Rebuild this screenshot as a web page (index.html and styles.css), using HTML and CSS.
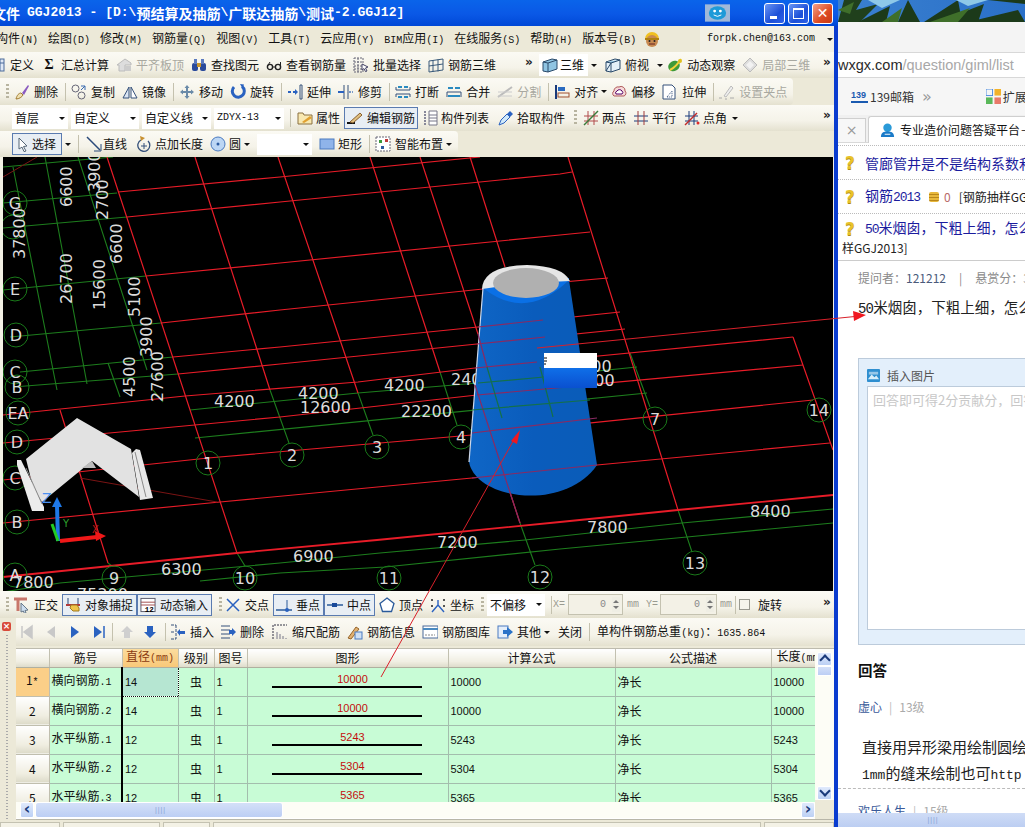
FILE: index.html
```html
<!DOCTYPE html>
<html lang="zh">
<head>
<meta charset="utf-8">
<title>GGJ2013</title>
<link rel="stylesheet" href="styles.css">
</head>
<body>
<svg class="defs" xmlns="http://www.w3.org/2000/svg">
<symbol id="i-def" viewBox="0 0 16 16"><rect x="2" y="2" width="12" height="12" fill="#dfe8f5" stroke="#4a6a9a"/><path d="M2 6h12M6 2v12M10 2v12" stroke="#4a6a9a"/></symbol>
<symbol id="i-level" viewBox="0 0 16 16"><path d="M1 8L9 2l6 4v2H9v6H3V8z" fill="#ddd" stroke="#bbb"/><rect x="9" y="9" width="6" height="5" fill="#ccc"/></symbol>
<symbol id="i-find" viewBox="0 0 16 16"><rect x="1" y="6" width="6" height="8" rx="2" fill="#2a4a9a"/><rect x="9" y="6" width="6" height="8" rx="2" fill="#2a4a9a"/><rect x="6" y="6" width="4" height="4" fill="#c9962a"/><rect x="3" y="2" width="3" height="5" fill="#5a7ac0"/><rect x="10" y="2" width="3" height="5" fill="#5a7ac0"/></symbol>
<symbol id="i-glass" viewBox="0 0 16 16"><circle cx="4" cy="10" r="2.6" fill="none" stroke="#222" stroke-width="1.4"/><circle cx="12" cy="10" r="2.6" fill="none" stroke="#222" stroke-width="1.4"/><path d="M6.5 10h3M1.5 9L4 5M14.5 9V5" stroke="#222" fill="none"/></symbol>
<symbol id="i-batch" viewBox="0 0 16 16"><path d="M1 1h9v14H1zM1 5h9M1 9h9M1 12h9M5 1v14" fill="none" stroke="#667" stroke-dasharray="2 1"/><path d="M9 7l6 3-2.5 1 1.5 3-1.5.6-1.5-3L9 13z" fill="#fff" stroke="#446"/></symbol>
<symbol id="i-rebar" viewBox="0 0 16 16"><path d="M1 4l14-2v11L1 15zM1 9l14-2M5 3v12M10 2.500v12" fill="none" stroke="#3a5a7a"/></symbol>
<symbol id="i-cube" viewBox="0 0 16 16"><path d="M1 5l9-3 5 1v9l-9 3-5-1z" fill="#8fc4e2" stroke="#2a4a6a"/><path d="M1 5l5 1 9-3M6 6v9" fill="none" stroke="#2a4a6a"/></symbol>
<symbol id="i-cubet" viewBox="0 0 16 16"><path d="M1 5l9-3 5 1v9l-9 3-5-1z" fill="#e4f0f8" stroke="#2a4a6a"/><path d="M1 5l5 1 9-3" fill="#8fc4e2" stroke="#2a4a6a"/><path d="M6 6v9M1 14l5-8" fill="none" stroke="#2a4a6a"/></symbol>
<symbol id="i-orbit" viewBox="0 0 16 16"><ellipse cx="7" cy="9" rx="6" ry="5" fill="#3f9a3a" transform="rotate(-30 7 9)"/><path d="M3 13C7 11 11 7 14 2" stroke="#f5d23a" stroke-width="2" fill="none"/><circle cx="13" cy="4" r="2" fill="#e0c020"/></symbol>
<symbol id="i-part" viewBox="0 0 16 16"><path d="M8 1l7 7-7 7-7-7z" fill="#ddd" stroke="#bbb"/><path d="M4 8l4-4 4 4-4 4z" fill="#f2f2f2"/></symbol>
<symbol id="i-del" viewBox="0 0 16 16"><path d="M2 15c1-4 3-6 5-6l2 2c-1 2-4 4-7 4z" fill="#efe0b0" stroke="#a07a30"/><path d="M8 9l6-8 1 1-5 9z" fill="#8a5ac0"/></symbol>
<symbol id="i-copy" viewBox="0 0 16 16"><circle cx="4.500" cy="4.500" r="3.500" fill="none" stroke="#667"/><circle cx="10.500" cy="11.500" r="3.500" fill="none" stroke="#667"/><path d="M10 2h4v4M14 2l-4 4" fill="none" stroke="#3a6ab0"/></symbol>
<symbol id="i-mirror" viewBox="0 0 16 16"><path d="M7 3v11H1z" fill="#dbe6f4" stroke="#35507a"/><path d="M9 3v11h6z" fill="#fff" stroke="#35507a"/></symbol>
<symbol id="i-move" viewBox="0 0 16 16"><path d="M8 1l2.500 3H9v3h3V5.500L15 8l-3 2.500V9H9v3h1.500L8 15l-2.500-3H7V9H4v1.500L1 8l3-2.500V7h3V4H5.500z" fill="#6a8aa8"/></symbol>
<symbol id="i-rot" viewBox="0 0 16 16"><path d="M4 3a6 6 0 1 0 8-.5" fill="none" stroke="#2a62c0" stroke-width="3"/><path d="M10 0l4 .5-1.500 4z" fill="#2a62c0"/></symbol>
<symbol id="i-ext" viewBox="0 0 16 16"><path d="M1 8h3M6 8h2" stroke="#2a62c0" stroke-width="2"/><path d="M8 5l3 3-3 3z" fill="#2a62c0"/><path d="M13 1h2v14h-2z" fill="none" stroke="#35507a"/></symbol>
<symbol id="i-trim" viewBox="0 0 16 16"><path d="M6 1v14M10 1v14" stroke="#35507a"/><path d="M0 8h6" stroke="#2a62c0" stroke-width="2"/><path d="M11 8h4" stroke="#7a9ac8" stroke-width="2" stroke-dasharray="2 1"/></symbol>
<symbol id="i-brk" viewBox="0 0 16 16"><path d="M1 3v3h14V3M1 13v-3h14v3" fill="none" stroke="#35507a"/><path d="M3 3h4M13 3H9M3 13h4M13 13H9" stroke="#2a8ac0" stroke-width="2"/></symbol>
<symbol id="i-mrg" viewBox="0 0 16 16"><path d="M1 13V8h14v5" fill="none" stroke="#35507a"/><path d="M2 4h5M14 4H9M2 12h12" stroke="#2a8ac0" stroke-width="2"/></symbol>
<symbol id="i-spl" viewBox="0 0 16 16"><path d="M1 13l14-10" stroke="#bbb" stroke-width="2"/><path d="M1 8h14M1 12h14" stroke="#ccc"/></symbol>
<symbol id="i-align" viewBox="0 0 16 16"><path d="M2 1v14" stroke="#1a3a7a" stroke-width="2"/><rect x="4" y="3" width="7" height="4" fill="#2a6ac0"/><rect x="4" y="9" width="11" height="4" fill="none" stroke="#a05030"/></symbol>
<symbol id="i-off" viewBox="0 0 16 16"><path d="M3 12a3 3 0 0 1 0-5 4 4 0 0 1 5-4 4 4 0 0 1 6 4 3 3 0 0 1-1 5z" fill="#f5d8d8" stroke="#b05a5a"/><path d="M5 10a2 2 0 0 1 1-3 3 3 0 0 1 5 0 2 2 0 0 1 0 3z" fill="#fff" stroke="#506"/></symbol>
<symbol id="i-str" viewBox="0 0 16 16"><path d="M1 1h9l3 3v11H1z" fill="#fff" stroke="#35507a"/><path d="M5 13l5-6v6z" fill="none" stroke="#35507a" stroke-dasharray="1 1"/></symbol>
<symbol id="i-grip" viewBox="0 0 16 16"><path d="M5 12L12 2l2 2-7 9z" fill="#eee" stroke="#bbb"/><path d="M0 14h3M6 15h2M11 14h4" stroke="#aaa"/></symbol>
<symbol id="i-prop" viewBox="0 0 16 16"><path d="M1 3h5l1 2h8v9H1z" fill="#f8e8b0" stroke="#8a7040"/><path d="M5 12l8-6 2 2-8 5z" fill="#e0a030"/></symbol>
<symbol id="i-edit" viewBox="0 0 16 16"><path d="M0 13h8" stroke="#111" stroke-width="2"/><path d="M3 12L13 3l2 2-9 8z" fill="#e0c080" stroke="#8a6030"/></symbol>
<symbol id="i-list" viewBox="0 0 16 16"><path d="M7 1h8v14H7zM7 5h8M7 8h8M7 11h8" fill="#fff" stroke="#778"/><path d="M2 2h2M2 5h2M2 8h2M2 11h2M2 14h2" stroke="#889" stroke-width="2"/></symbol>
<symbol id="i-pick" viewBox="0 0 16 16"><path d="M1 15l2-5 6-6 3 3-6 6z" fill="#cfe8fa" stroke="#2a62c0"/><path d="M9 4l3-3 3 3-3 3z" fill="#2a62c0"/></symbol>
<symbol id="i-two" viewBox="0 0 16 16"><path d="M1 6h14M1 11h14M5 1v14M11 1v14" stroke="#b04a4a"/><path d="M1 15L15 1" stroke="#3a7a3a" stroke-width="1.500"/></symbol>
<symbol id="i-par" viewBox="0 0 16 16"><path d="M1 6h14M1 11h14" stroke="#1a3a7a"/><path d="M5 1v14M11 1v14" stroke="#a03a3a"/></symbol>
<symbol id="i-ang" viewBox="0 0 16 16"><path d="M1 6h13M1 11h13M5 1v14M10 1v14" stroke="#1a3a7a"/><path d="M1 15L13 3" stroke="#c02a2a" stroke-width="1.500"/><circle cx="14" cy="13" r="1.500" fill="#e02a2a"/></symbol>
<symbol id="i-sel" viewBox="0 0 16 16"><path d="M4 2l8 8-3.500.5L11 15l-2 .6-2-4.500L4 13z" fill="#fff" stroke="#567"/></symbol>
<symbol id="i-line" viewBox="0 0 16 16"><path d="M1 1l13 13" stroke="#2a4a7a" stroke-width="1.500"/><path d="M15 8v7H8" fill="none" stroke="#2a4a7a"/></symbol>
<symbol id="i-plen" viewBox="0 0 16 16"><path d="M5 4a6 6 0 1 0 7 1" fill="none" stroke="#35507a" stroke-width="1.300"/><path d="M8 7v6M5 10h6" stroke="#35507a"/><path d="M4 0l5 2-4 3z" fill="#c89030"/></symbol>
<symbol id="i-circ" viewBox="0 0 16 16"><circle cx="8" cy="8" r="7" fill="#bcd6f4" stroke="#4a7ac0"/><circle cx="8" cy="8" r="1.500" fill="#2a5aa0"/></symbol>
<symbol id="i-rect" viewBox="0 0 16 16"><rect x="1" y="3" width="14" height="10" fill="#8fb4ea" stroke="#4a7ac0"/></symbol>
<symbol id="i-smart" viewBox="0 0 16 16"><rect x="1" y="1" width="14" height="14" fill="#fff" stroke="#667" stroke-dasharray="2 1"/><rect x="4" y="4" width="3" height="3" fill="#3a9a3a"/><rect x="10" y="3" width="3" height="3" fill="#c03a3a"/><rect x="6" y="10" width="3" height="3" fill="#2a5aa0"/></symbol>
<symbol id="i-ortho" viewBox="0 0 16 16"><path d="M0 2h13M4 2v12" stroke="#c8766a" stroke-width="3"/><path d="M7 6l7 7-3 .5 1 2.500-1.500.500-1.200-2.500L7 15z" fill="#cde" stroke="#678"/></symbol>
<symbol id="i-snap" viewBox="0 0 16 16"><path d="M1 8h14" stroke="#b03a3a" stroke-width="2"/><path d="M3 1v6M13 1v6" stroke="#2a4a7a"/><path d="M6 8h6l2 3v3H8l-3-3z" fill="#efc44a" stroke="#a07a20"/></symbol>
<symbol id="i-dyn" viewBox="0 0 17 16"><rect x="1" y="1" width="15" height="14" fill="#fff" stroke="#556"/><path d="M1 5h15M1 8h15" stroke="#a04a4a"/><text x="5" y="15" font-size="8" font-family="Liberation Mono" font-weight="700">12</text></symbol>
<symbol id="i-x" viewBox="0 0 16 16"><path d="M2 2l12 12M14 2L2 14" stroke="#2a62c0" stroke-width="1.500"/></symbol>
<symbol id="i-perp" viewBox="0 0 16 16"><path d="M0 13h16" stroke="#2a5a9a" stroke-width="1.500"/><path d="M11 3v10" stroke="#2a5a9a"/><circle cx="11" cy="13" r="2" fill="#2a62c0"/></symbol>
<symbol id="i-mid" viewBox="0 0 16 16"><path d="M0 8h16" stroke="#2a5a9a" stroke-width="1.500"/><rect x="5" y="6" width="5" height="4" fill="#1a4a9a"/></symbol>
<symbol id="i-vert" viewBox="0 0 16 16"><path d="M8 1l7 5.500-2.500 8h-9L1 6.500z" fill="#fff" stroke="#2a5a9a" stroke-width="1.300"/></symbol>
<symbol id="i-crd" viewBox="0 0 16 16"><path d="M8 8l-6 7M8 8l6 7M8 8V3" stroke="#2a62c0" stroke-width="1.400"/><path d="M1 3h2M13 3h2M1 9h2M13 9h2" stroke="#555" stroke-width="2" stroke-dasharray="2 1"/></symbol>
<symbol id="i-first" viewBox="0 0 16 16"><path d="M3 2v12M13 2L5 8l8 6z" stroke="#c8c8c8" fill="#c8c8c8" stroke-width="1.500"/></symbol>
<symbol id="i-prev" viewBox="0 0 16 16"><path d="M12 2L4 8l8 6z" fill="#c8c8c8"/></symbol>
<symbol id="i-next" viewBox="0 0 16 16"><path d="M4 2l8 6-8 6z" fill="#2a62c0"/></symbol>
<symbol id="i-last" viewBox="0 0 16 16"><path d="M13 2v12" stroke="#2a62c0" stroke-width="1.500"/><path d="M3 2l8 6-8 6z" fill="#2a62c0"/></symbol>
<symbol id="i-up" viewBox="0 0 16 16"><path d="M8 2l6 6h-3v6H5V8H2z" fill="#cfcfcf"/></symbol>
<symbol id="i-down" viewBox="0 0 16 16"><path d="M8 14l6-6h-3V2H5v6H2z" fill="#2a62c0"/></symbol>
<symbol id="i-ins" viewBox="0 0 16 16"><path d="M1 1h5M1 15h5M1 8h3M6 1v14" fill="none" stroke="#35507a" stroke-dasharray="3 1"/><path d="M7 8l3-3v2h5v3h-5v2z" fill="#2a62c0"/></symbol>
<symbol id="i-rem" viewBox="0 0 16 16"><path d="M1 2h9M1 6h9M1 10h9M1 14h9" stroke="#35507a"/><path d="M9 6h3V4l4 4-4 4v-2H9z" fill="#2a62c0"/></symbol>
<symbol id="i-scale" viewBox="0 0 16 16"><path d="M1 15V1h14" fill="none" stroke="#334" stroke-dasharray="2 1"/><path d="M5 15V8M8 15v-5M11 15v-3M14 15v-1" stroke="#778"/></symbol>
<symbol id="i-info" viewBox="0 0 16 16"><path d="M1 14L9 3l3 2-8 10z" fill="#e0b070" stroke="#96642a"/><rect x="8" y="8" width="7" height="7" fill="#cfe0f4" stroke="#4a7ac0"/></symbol>
<symbol id="i-lib" viewBox="0 0 16 16"><rect x="1" y="2" width="15" height="12" fill="#fff" stroke="#4a6a9a"/><path d="M1 5h15" stroke="#4a8ac0" stroke-width="2"/><path d="M3 11h10" stroke="#888" stroke-dasharray="2 1"/></symbol>
<symbol id="i-other" viewBox="0 0 16 16"><rect x="1" y="2" width="10" height="12" fill="#e4eefa" stroke="#4a7ac0"/><path d="M6 6h4V3l6 5-6 5v-3H6z" fill="#2a72c8"/></symbol>
<symbol id="i-face" viewBox="0 0 18 18"><path d="M2 9a7 7 0 0 1 14 0z" fill="#f0c020"/><circle cx="9" cy="11" r="6" fill="#c88a50"/><path d="M2 9h14" stroke="#b08010" stroke-width="2"/><circle cx="6.500" cy="11" r="1" fill="#222"/><circle cx="11.500" cy="11" r="1" fill="#222"/><path d="M6 14h6" stroke="#622"/></symbol>
</svg>

<main class="desktop">

<section class="app">
  <header class="titlebar">
    <div class="title"><span class="tc">文件</span> <span class="tl">GGJ2013 -</span> <span class="tl">[D:\</span><span class="tc">预结算及抽筋</span><span class="tl">\</span><span class="tc">广联达抽筋</span><span class="tl">\</span><span class="tc">测试</span><span class="tl">-2.GGJ12]</span></div>
    <svg class="logo" viewBox="0 0 26 18"><rect width="26" height="18" fill="#9fb8d8"/><path d="M4 9a9 7 0 0 1 18 0 9 7 0 0 1-18 0z" fill="#1e9ad8"/><circle cx="10" cy="7" r="1.500" fill="#fff"/><circle cx="16" cy="7" r="1.500" fill="#fff"/><path d="M9 11q4 3 8 0" stroke="#fff" fill="none"/></svg>
    <div class="wbtns">
      <span class="wbtn min"><i></i></span>
      <span class="wbtn max"><i></i></span>
      <span class="wbtn close">✕</span>
    </div>
  </header>
  <div class="client">
    <nav class="menu">
      <span class="mi">构件<span class="k">(N)</span></span>
      <span class="mi">绘图<span class="k">(D)</span></span>
      <span class="mi">修改<span class="k">(M)</span></span>
      <span class="mi">钢筋量<span class="k">(Q)</span></span>
      <span class="mi">视图<span class="k">(V)</span></span>
      <span class="mi">工具<span class="k">(T)</span></span>
      <span class="mi">云应用<span class="k">(Y)</span></span>
      <span class="mi"><span class="k">BIM</span>应用<span class="k">(I)</span></span>
      <span class="mi">在线服务<span class="k">(S)</span></span>
      <span class="mi">帮助<span class="k">(H)</span></span>
      <span class="mi">版本号<span class="k">(B)</span></span>
      <svg class="emoji"><use href="#i-face"/></svg>
      <span class="account"><span class="k">forpk.chen@163.com</span><i class="caret"></i></span>
    </nav>

    <div class="band b26">
      <div class="tb full r1">
        <span class="it cut"><svg class="ic"><use href="#i-def"/></svg>定义</span>
        <span class="it"><span class="sigma">Σ</span>汇总计算</span>
        <span class="it off"><svg class="ic"><use href="#i-level"/></svg>平齐板顶</span>
        <span class="it"><svg class="ic"><use href="#i-find"/></svg>查找图元</span>
        <span class="it"><svg class="ic"><use href="#i-glass"/></svg>查看钢筋量</span>
        <span class="it"><svg class="ic"><use href="#i-batch"/></svg>批量选择</span>
        <span class="it"><svg class="ic"><use href="#i-rebar"/></svg>钢筋三维</span>
        <span class="chev c1">»</span>
        <span class="it dim3"><svg class="ic"><use href="#i-cube"/></svg>三维</span>
        <i class="caret"></i>
        <span class="it v"><svg class="ic"><use href="#i-cubet"/></svg>俯视</span>
        <i class="caret c-v"></i>
        <span class="it v"><svg class="ic"><use href="#i-orbit"/></svg>动态观察</span>
        <span class="it off"><svg class="ic"><use href="#i-part"/></svg>局部三维</span>
        <span class="chev end">»</span>
      </div>
    </div>

    <div class="band b27">
      <div class="tb r2">
        <i class="grip"></i>
        <span class="it"><svg class="ic"><use href="#i-del"/></svg>删除</span>
        <i class="sep tight"></i>
        <span class="it"><svg class="ic"><use href="#i-copy"/></svg>复制</span>
        <span class="it"><svg class="ic"><use href="#i-mirror"/></svg>镜像</span>
        <i class="sep tight"></i>
        <span class="it"><svg class="ic"><use href="#i-move"/></svg>移动</span>
        <span class="it"><svg class="ic"><use href="#i-rot"/></svg>旋转</span>
        <i class="sep tight"></i>
        <span class="it"><svg class="ic"><use href="#i-ext"/></svg>延伸</span>
        <span class="it"><svg class="ic"><use href="#i-trim"/></svg>修剪</span>
        <i class="sep tight"></i>
        <span class="it"><svg class="ic"><use href="#i-brk"/></svg>打断</span>
        <span class="it"><svg class="ic"><use href="#i-mrg"/></svg>合并</span>
        <span class="it off"><svg class="ic"><use href="#i-spl"/></svg>分割</span>
        <i class="sep tight"></i>
        <span class="it"><svg class="ic"><use href="#i-align"/></svg>对齐</span>
        <i class="caret"></i>
        <span class="it"><svg class="ic"><use href="#i-off"/></svg>偏移</span>
        <span class="it"><svg class="ic"><use href="#i-str"/></svg>拉伸</span>
        <i class="sep tight"></i>
        <span class="it off"><svg class="ic"><use href="#i-grip"/></svg>设置夹点</span>
      </div>
    </div>

    <div class="band b26">
      <div class="tb full r3">
        <span class="combo c-a">首层<i class="caret"></i></span>
        <span class="combo c-b">自定义<i class="caret"></i></span>
        <span class="combo c-c">自定义线<i class="caret"></i></span>
        <span class="combo c-d"><span class="k">ZDYX-13</span><i class="caret"></i></span>
        <i class="sep"></i>
        <span class="it"><svg class="ic"><use href="#i-prop"/></svg>属性</span>
        <span class="it btn b-edit"><svg class="ic"><use href="#i-edit"/></svg>编辑钢筋</span>
        <span class="it"><svg class="ic"><use href="#i-list"/></svg>构件列表</span>
        <span class="it wide w3"><svg class="ic"><use href="#i-pick"/></svg>拾取构件</span>
        <i class="grip g-mid"></i>
        <span class="it"><svg class="ic"><use href="#i-two"/></svg>两点</span>
        <span class="it w1"><svg class="ic"><use href="#i-par"/></svg>平行</span>
        <span class="it wide"><svg class="ic"><use href="#i-ang"/></svg>点角</span>
        <i class="caret"></i>
        <span class="chev end">»</span>
      </div>
    </div>

    <div class="band b26">
      <div class="tb r4">
        <span class="it btn b-sel"><svg class="ic"><use href="#i-sel"/></svg>选择</span>
        <i class="caret"></i>
        <i class="sep"></i>
        <span class="it g1"><svg class="ic"><use href="#i-line"/></svg>直线</span>
        <span class="it"><svg class="ic"><use href="#i-plen"/></svg>点加长度</span>
        <span class="it"><svg class="ic"><use href="#i-circ"/></svg>圆</span>
        <i class="caret"></i>
        <span class="combo c-e"><i class="caret"></i></span>
        <span class="it"><svg class="ic"><use href="#i-rect"/></svg>矩形</span>
        <i class="sep tight"></i>
        <span class="it n4"><svg class="ic"><use href="#i-smart"/></svg>智能布置</span>
        <i class="caret"></i>
      </div>
    </div>

    <div class="viewport">
      <svg class="scene" viewBox="3 157 830 434" xmlns="http://www.w3.org/2000/svg">
        <defs>
          <linearGradient id="body" x1="0" x2="1" y1="0" y2="0"><stop offset="0" stop-color="#0f66c6"/><stop offset=".5" stop-color="#0a5cbc"/><stop offset="1" stop-color="#0a5cb8"/></linearGradient>
          <linearGradient id="tip" x1="0" x2="0" y1="0" y2="1"><stop offset="0" stop-color="#0f6fe8"/><stop offset="1" stop-color="#0a50d0"/></linearGradient>
        </defs>
        <rect x="3" y="157" width="830" height="434" fill="#000"/>
        <g class="gl">
          <path d="M3 167L113 157M3 203L117 193M3 228L127 217M3 290L146 276M10 337L161 323M20 372L173 357M13 387L178 374"/>
          <path d="M13 167L57 390M45 157L87 384M78 157L147 370M108 363L120 397M153 390L163 402"/>
          <path d="M237 553L245 566M270 390L289 443M358 393L373 435M440 372L457 425M108 563L112 566M678 510L692 552M630 353L650 407"/>
          <path d="M190 410L358 393L490 382L637 367M195 438L647 393"/>
          <path d="M3 592L60 583L280 563L380 553L525 540L682 523L833 509M200 581L280 573L385 567L560 549L687 537L833 523"/>
          <path d="M520 523L535 565"/>
        </g>
        <g class="rl">
          <path d="M107 157L237 553M195 157L270 390M278 157L358 393M370 157L440 372M420 157L478 334M470 157L505 267M60 410L108 563M568 157L678 510M793 337L833 450M520 523L475 385"/>
          <path d="M118 192L280 177L480 157M127 217L280 202L560 174L572 172M146 276L280 263L560 235L590 232M161 323L280 310L483 289L608 278M173 357L280 347L478 327L620 312M178 374L280 364L477 344L625 329"/>
          <path d="M3 415L185 396L358 382L475 368L537 362L793 337M3 443L280 417L477 395L803 365M3 480L208 458L472 435L813 400M3 523L220 502L472 478L597 465L830 443"/>
          <path class="bold" d="M3 577L237 553L377 540L560 522L678 510L833 495"/>
        </g>
        <path class="dk" d="M80 478L217 502M3 177L37 157"/>

        <g class="gc">
          <circle cx="15" cy="203" r="12"/><circle cx="13" cy="227" r="12"/><circle cx="15" cy="289" r="12"/><circle cx="16" cy="335" r="12"/><circle cx="15" cy="372" r="12"/><circle cx="17" cy="387" r="12"/><circle cx="18" cy="413" r="12"/><circle cx="17" cy="442" r="12"/><circle cx="15" cy="478" r="12"/><circle cx="17" cy="522" r="12"/><circle cx="15" cy="575" r="12"/>
          <circle cx="208" cy="463" r="12"/><circle cx="292" cy="455" r="12"/><circle cx="377" cy="447" r="12"/><circle cx="461" cy="437" r="12"/><circle cx="655" cy="419" r="12"/><circle cx="114" cy="578" r="12"/><circle cx="245" cy="578" r="12"/><circle cx="389" cy="578" r="12"/><circle cx="540" cy="577" r="12"/><circle cx="695" cy="563" r="12"/><circle cx="819" cy="410" r="12"/>
        </g>
        <g class="lb mid">
          <text x="15" y="209">G</text><text x="15" y="295">E</text><text x="16" y="341">D</text><text x="15" y="378">C</text><text x="17" y="393">B</text><text x="18" y="419">EA</text><text x="17" y="448">D</text><text x="15" y="484">C</text><text x="17" y="528">B</text><text x="15" y="581">A</text>
          <text x="208" y="469">1</text><text x="292" y="461">2</text><text x="377" y="453">3</text><text x="461" y="443">4</text><text x="655" y="425">7</text><text x="114" y="584">9</text><text x="245" y="584">10</text><text x="389" y="584">11</text><text x="540" y="583">12</text><text x="695" y="569">13</text><text x="819" y="416">14</text>
        </g>
        <g class="lb">
          <text x="214" y="407">4200</text><text x="298" y="399">4200</text><text x="300" y="413">12600</text><text x="384" y="391">4200</text><text x="401" y="417">22200</text><text x="451" y="385">2400</text>
          <text x="571" y="372">2400</text><text x="574" y="386">2400</text>
          <text x="161" y="575">6300</text><text x="293" y="562">6900</text><text x="437" y="548">7200</text><text x="587" y="533">7800</text><text x="750" y="517">8400</text><text x="13" y="588">7800</text><text x="77" y="600">75300</text>
          <text transform="rotate(-90 25 259)" x="25" y="259">37800</text>
          <text transform="rotate(-90 72 207)" x="72" y="207">6600</text>
          <text transform="rotate(-90 100 192)" x="100" y="192">3900</text>
          <text transform="rotate(-90 108 220)" x="108" y="220">2700</text>
          <text transform="rotate(-90 72 304)" x="72" y="304">26700</text>
          <text transform="rotate(-90 105 310)" x="105" y="310">15600</text>
          <text transform="rotate(-90 122 264)" x="122" y="264">6600</text>
          <text transform="rotate(-90 140 317)" x="140" y="317">5100</text>
          <text transform="rotate(-90 152 357)" x="152" y="357">3900</text>
          <text transform="rotate(-90 135 397)" x="135" y="397">4500</text>
          <text transform="rotate(-90 163 402)" x="163" y="402">27600</text>
        </g>

        <path fill="url(#body)" d="M483 288L469 462C476 500 565 512 597 465L569 280Z"/>
        <path d="M483 288L469 462" stroke="#cfd8e8" stroke-width="1.200"/>
        <path fill="#0a70e6" d="M483 288Q526 322 569 280L569 278L483 286Z"/>
        <path fill="#e6e6e6" d="M482 289Q483 266 527 265Q563 266 570 281Q527 282 482 289Z"/>
        <ellipse cx="526" cy="283" rx="33" ry="15" fill="#b0b0b0"/>

        <g class="ov-r">
          <path d="M475 368L537 362M477 395L590 385M472 433L597 418M472 478L597 465M478 334L487 367M478 327L543 320M477 344L545 337M475 385L520 523"/>
        </g>
        <g class="ov-g">
          <path d="M478 383L544 377M472 410L590 400M487 367L502 418M540 367L553 417"/>
        </g>
        <rect x="544" y="353" width="53" height="15" fill="#fff"/>
        <rect x="544" y="368" width="53" height="20" fill="url(#tip)"/>
        <path d="M544 358h3M544 361h3M544 364h2" stroke="#000"/>

        <g class="gizmo">
          <path fill="#ececec" d="M17 460L21 460L44 507L44 511L32 511L17 465Z"/>
          <path fill="#e8e8e8" d="M136 449L140 450L153 498L140 500L132 453Z"/>
          <path fill="#e2e2e2" d="M26 459L77 418L131 449L139 497L92 461L42 502L33 487Z"/>
          <path fill="#bcbcbc" d="M82 468L92 461L96 468Z"/>
          <path d="M26 468L42 504M135 452L146 497" stroke="#8a8a8a" stroke-width="1"/>
          <path d="M58 541L57 505" stroke="#1e78e6" stroke-width="4"/><path d="M52 507L57 497L62 507Z" fill="#1e78e6"/>
          <path d="M60 541L97 537" stroke="#f01818" stroke-width="4"/><path d="M95 531L106 536L96 541Z" fill="#f01818"/>
          <path d="M58 541L52 524" stroke="#22cc22" stroke-width="3"/>
          <text class="ax az" x="42" y="503">Z</text><text class="ax ay" x="63" y="527">Y</text><text class="ax ar" x="92" y="533">X</text>
        </g>
      </svg>
    </div>

    <div class="band b27">
      <div class="tb full r5">
        <i class="grip"></i>
        <span class="it n4"><svg class="ic"><use href="#i-ortho"/></svg>正交</span>
        <span class="bgroup">
          <span class="it n4 btn b-wide"><svg class="ic"><use href="#i-snap"/></svg>对象捕捉</span>
          <span class="it n4 btn b-wide"><svg class="ic"><use href="#i-dyn"/></svg>动态输入</span>
        </span>
        <i class="grip g-a"></i>
        <span class="it n4"><svg class="ic"><use href="#i-x"/></svg>交点</span>
        <span class="bgroup">
          <span class="it n4 btn b-pt"><svg class="ic"><use href="#i-perp"/></svg>垂点</span>
          <span class="it n4 btn b-pt"><svg class="ic"><use href="#i-mid"/></svg>中点</span>
        </span>
        <span class="it n4"><svg class="ic"><use href="#i-vert"/></svg>顶点</span>
        <span class="it n4 sp3"><svg class="ic"><use href="#i-crd"/></svg>坐标</span>
        <i class="grip g-a"></i>
        <span class="combo c-f">不偏移<i class="caret"></i></span>
        <i class="sep s-a"></i>
        <span class="fld"><span class="k grey">X=</span><span class="spin"><b class="k">0</b><i class="updown"></i></span><span class="k grey">mm</span></span>
        <span class="fld f-y"><span class="k grey">Y=</span><span class="spin s-y"><b class="k">0</b><i class="updown"></i></span><span class="k grey">mm</span></span>
        <i class="sep s-b"></i>
        <i class="check"></i>
        <span class="rot">旋转</span>
        <span class="chev end">»</span>
      </div>
    </div>

    <div class="panel">
      <div class="panel-body">
        <div class="panel-side"><span class="xclose">×</span><i class="dots"></i></div>
        <div class="panel-main">
          <div class="tb full nav">
            <span class="navbtns">
              <svg class="ic"><use href="#i-first"/></svg><svg class="ic"><use href="#i-prev"/></svg><svg class="ic"><use href="#i-next"/></svg><svg class="ic"><use href="#i-last"/></svg>
            </span>
            <i class="sep s-n"></i>
            <svg class="ic"><use href="#i-up"/></svg><svg class="ic"><use href="#i-down"/></svg>
            <i class="sep s-m"></i>
            <span class="it"><svg class="ic"><use href="#i-ins"/></svg>插入</span>
            <span class="it s-6"><svg class="ic"><use href="#i-rem"/></svg>删除</span>
            <span class="it s-9"><svg class="ic"><use href="#i-scale"/></svg>缩尺配筋</span>
            <span class="it"><svg class="ic"><use href="#i-info"/></svg>钢筋信息</span>
            <span class="it"><svg class="ic"><use href="#i-lib"/></svg>钢筋图库</span>
            <span class="it"><svg class="ic"><use href="#i-other"/></svg>其他</span>
            <i class="caret c-n"></i>
            <span class="s-c">关闭</span>
            <i class="sep"></i>
            <span>单构件钢筋总重<span class="k">(kg)</span>：<span class="k">1635.864</span></span>
          </div>
          <div class="gridwrap">
            <div class="gridleft">
              <div class="tableclip">
                <table class="grid">
                  <colgroup><col class="w-h"><col class="w-a"><col class="w-b"><col class="w-c"><col class="w-d"><col class="w-e"><col class="w-f"><col class="w-g"><col class="w-i"></colgroup>
                  <thead>
                    <tr><th></th><th>筋号</th><th class="act">直径<span class="k">(mm)</span></th><th>级别</th><th>图号</th><th>图形</th><th>计算公式</th><th>公式描述</th><th class="clip">长度<span class="k">(mm)</span></th></tr>
                  </thead>
                  <tbody>
                    <tr><th class="act rowh">1<span class="k">*</span></th><td>横向钢筋<span class="k">.1</span></td><td class="cur k14">14</td><td class="ctr">虫</td><td class="nm">1</td><td><div class="shape">10000</div></td><td class="nm">10000</td><td>净长</td><td class="nm">10000</td></tr>
                    <tr><th class="rowh">2</th><td>横向钢筋<span class="k">.2</span></td><td class="nm dia">14</td><td class="ctr">虫</td><td class="nm">1</td><td><div class="shape">10000</div></td><td class="nm">10000</td><td>净长</td><td class="nm">10000</td></tr>
                    <tr><th class="rowh">3</th><td>水平纵筋<span class="k">.1</span></td><td class="nm dia">12</td><td class="ctr">虫</td><td class="nm">1</td><td><div class="shape">5243</div></td><td class="nm">5243</td><td>净长</td><td class="nm">5243</td></tr>
                    <tr><th class="rowh">4</th><td>水平纵筋<span class="k">.2</span></td><td class="nm dia">12</td><td class="ctr">虫</td><td class="nm">1</td><td><div class="shape">5304</div></td><td class="nm">5304</td><td>净长</td><td class="nm">5304</td></tr>
                    <tr><th class="rowh">5</th><td>水平纵筋<span class="k">.3</span></td><td class="nm dia">12</td><td class="ctr">虫</td><td class="nm">1</td><td><div class="shape">5365</div></td><td class="nm">5365</td><td>净长</td><td class="nm">5365</td></tr>
                  </tbody>
                </table>
              </div>
              <div class="hscroll"><span class="sbtn l">‹</span><span class="thumb"><i>||||</i></span><span class="sbtn r">›</span></div>
            </div>
            <div class="vscroll"><span class="vbtn up"></span><span class="vthumb"></span><span class="vtrack"></span><span class="vbtn dn"></span><span class="corner"></span></div>
          </div>
        </div>
      </div>
      <div class="status"><i class="st1"></i><i class="st2"></i><i class="st3"></i><i class="st4"></i><i class="st5"></i></div>
    </div>
  </div>
</section>

<section class="browser">
  <svg class="wall" viewBox="0 0 187 22" preserveAspectRatio="none" xmlns="http://www.w3.org/2000/svg">
    <defs><linearGradient id="sky" x1="0" x2="1" y1="0" y2="0"><stop offset="0" stop-color="#3a80d0"/><stop offset="1" stop-color="#2a70c8"/></linearGradient></defs>
    <rect width="187" height="22" fill="url(#sky)"/>
    <path d="M0 22L6 0H24L18 10L40 4L22 22Z" fill="#20401c"/>
    <path d="M20 22L52 6L48 22ZM70 0L82 22H60ZM86 22L120 0L124 22ZM100 22L146 4L140 22ZM130 22L180 10L187 22ZM150 0L187 4V0Z" fill="#1c3a1a"/>
    <path d="M44 22L64 8L60 22ZM92 22L132 8L120 22ZM0 10L16 2L12 14Z" fill="#3f6f2a"/>
    <path d="M30 0H62L44 8ZM118 0H150L130 6Z" fill="#8ec8e8"/>
  </svg>
  <div class="b-top"></div>
  <div class="addr"><span class="host">wxgx.com</span>/question/giml/list</div>
  <div class="bm">
    <span class="mail"><b class="m139">139</b><span class="m-t">139邮箱</span></span>
    <span class="more">»</span>
    <i class="vdots"></i>
    <svg class="ext" viewBox="0 0 16 16"><rect x="0" y="0" width="7" height="7" fill="none" stroke="#4a8ae0"/><rect x="9" y="0" width="7" height="7" fill="#f2b22a"/><rect x="0" y="9" width="7" height="7" fill="#5ab85a"/><rect x="9" y="9" width="7" height="7" fill="#e87a6a"/></svg>
    <span class="ext-t">扩展</span>
  </div>
  <div class="tabs">
    <span class="tab-x">×</span>
    <span class="tab-on">
      <svg class="fav" viewBox="0 0 16 16"><circle cx="8" cy="5" r="4.500" fill="#2a9ad8"/><path d="M1 15c0-5 3-6 7-6s7 1 7 6z" fill="#1a7ac8"/><path d="M5 12h6" stroke="#fff"/></svg>
      专业造价问题答疑平台－
    </span>
  </div>
  <div class="content">
    <div class="q first"><span class="qm">?</span><span class="qt">管廊管井是不是结构系数和</span></div>
    <div class="q"><span class="qm">?</span><span class="qt">钢筋<span class="lat">2013</span></span><i class="coin"></i><span class="zero">0</span><span class="tag">[钢筋抽样GGJ2013]</span></div>
    <div class="q last"><div class="q1"><span class="qm">?</span><span class="qt"><span class="lat">50</span>米烟囱，下粗上细，怎么</span></div><div class="tagline">样GGJ2013]</div></div>
    <div class="asker">提问者：<span class="who">121212</span><span class="pipe">|</span>悬赏分：3</div>
    <p class="qtext"><span class="lat">50</span>米烟囱，下粗上细，怎么</p>
    <div class="editor">
      <div class="ed-head"><svg class="pic" viewBox="0 0 14 14"><rect width="14" height="14" rx="1" fill="#2f8fd0"/><path d="M1 11l4-5 3 3 2-2 3 4z" fill="#d8eefa"/><path d="M2 3h10v3H2z" fill="#fff" opacity=".5"/></svg>插入图片</div>
      <div class="ed-area">回答即可得2分贡献分，回答被</div>
    </div>
    <h3 class="ans">回答</h3>
    <div class="author"><span class="au">虚心</span><span class="bar">|</span><span class="lv">13级</span></div>
    <div class="answer">直接用异形梁用绘制圆绘<br><span class="am">1mm</span>的缝来绘制也可<span class="am">http</span></div>
    <div class="author a2"><span class="au">欢乐人生</span><span class="bar">|</span><span class="lv">15级</span></div>
  </div>
  <div class="b-scroll"><i>||||</i></div>
</section>

<svg class="marks" viewBox="0 0 1025 827" xmlns="http://www.w3.org/2000/svg">
  <path d="M381 677L516 436" stroke="#d8202a" stroke-width="1"/>
  <path d="M511 441L520 430L517 444Z" fill="#f01820"/>
  <path d="M537 348L855 316.500" stroke="#d8202a" stroke-width="1"/>
  <path d="M853 311L866 315L854 321Z" fill="#f01820"/>
</svg>
</main>
</body>
</html>
```

FILE: styles.css
```css
* { box-sizing: border-box; }
html, body { margin: 0; padding: 0; width: 1025px; height: 827px; overflow: hidden; background: #fff; }
body { font: 12px/14px "Noto Sans CJK SC", "Liberation Sans", sans-serif; color: #111; }
i { font-style: normal; display: block; }
.defs { display: none; }
.desktop { position: relative; width: 1025px; height: 827px; overflow: hidden; }

/* app window */
.app { position: absolute; left: 0; top: 0; width: 838px; height: 827px; overflow: hidden; background: #0a3ccf; }
.titlebar { height: 26px; display: flex; align-items: center; background: linear-gradient(#0a64ea, #0a58e6 55%, #0048d6); position: relative; }
.title { margin-left: -8px; color: #fff; white-space: nowrap; font-weight: 700; flex: none; width: 712px; display: flex; align-items: center; }
.tc { font-size: 14px; }
.tl { font: 700 13px/14px "Liberation Mono", monospace; white-space: pre; }
.title > .tl:nth-of-type(2) { margin-left: 7px; }
.title > .tl:nth-of-type(3) { margin-left: 8px; }
.logo { width: 25px; height: 18px; flex: none; margin-left: 1px; }
.wbtns { margin-left: 34px; display: flex; gap: 3px; flex: none; }
.wbtn { width: 21px; height: 21px; border-radius: 3px; border: 1px solid #fff; background: linear-gradient(135deg, #6a96f4, #1c4fd8 60%, #2f62e8); position: relative; display: block; }
.wbtn.min i { position: absolute; left: 5px; bottom: 4px; width: 7px; height: 3px; background: #fff; }
.wbtn.max i { position: absolute; left: 4px; top: 4px; width: 11px; height: 11px; border: 1px solid #fff; border-top-width: 2px; }
.wbtn.close { background: linear-gradient(135deg, #f4a088, #dc4a22 60%, #c83a14); color: #fff; font: 700 14px/19px "DejaVu Sans", sans-serif; text-align: center; }
.client { width: 834px; }

.menu { height: 26px; background: #ece9d8; display: flex; align-items: center; white-space: nowrap; position: relative; }
.mi { flex: none; margin-right: 10px; }
.mi:first-child { margin-left: -4px; }
.k { font: 10px/14px "Liberation Mono", monospace; }
.emoji { width: 18px; height: 18px; margin-left: -3px; }
.account { margin-left: auto; width: 134px; height: 26px; background: #f3f1e6; display: flex; align-items: center; padding-left: 7px; gap: 12px; }

.band { background: #ece9d8; }
.b26 { height: 26px; }
.b27 { height: 27px; }
.tb { position: relative; height: 100%; display: flex; align-items: center; gap: 7px; white-space: nowrap; background: linear-gradient(#fbfaf4, #f5f3e9 60%, #e4e1cf); width: fit-content; border-radius: 0 4px 4px 0; }
.tb.full { width: 100%; border-radius: 0; }
.it { display: flex; align-items: center; gap: 4px; flex: none; }
.ic { width: 16px; height: 16px; flex: none; display: block; }
.off { color: #a8a8a0; }
.sigma { font: 700 14px/16px "Liberation Serif", serif; width: 16px; text-align: center; color: #111; }
.cut { margin-left: -10px; }
.chev { font: 700 12px/12px "DejaVu Sans", sans-serif; margin-top: -6px; color: #222; flex: none; width: 8px; }
.chev.end { position: absolute; left: 823px; }
.c1 { margin-left: 22px; }
.dim3 { gap: 2px; background: #fff; height: 22px; padding-left: 3px; padding-right: 4px; width: 49px; margin-left: -1px; margin-right: -5px; }
.caret { display: block; flex: none; width: 0; height: 0; border-left: 3px solid transparent; border-right: 3px solid transparent; border-top: 3px solid #111; }
.r1 .caret { margin-left: 1px; }
.r1 .it.v { margin-left: 1px; }
.r1 .c-v { margin-right: -4px; }
.grip { width: 3px; height: 16px; flex: none; background: repeating-linear-gradient(#b8b4a0 0 2px, transparent 2px 4px); margin-right: -2px; }
.sep { width: 1px; height: 18px; flex: none; background: #c4c1ae; }
.sep.tight { margin-right: -2px; }
.r2 { padding-left: 6px; padding-right: 6px; }
.r2 .caret { margin-left: -4px; margin-right: -3px; }

.r3 { padding-left: 12px; gap: 6px; }
.r3 .it { gap: 3px; }
.combo { background: #fff; height: 21px; display: flex; align-items: center; justify-content: space-between; padding: 0 3px; flex: none; }
.c-a { width: 56px; }
.c-b { width: 68px; }
.c-c { width: 69px; }
.c-d { width: 70px; }
.c-e { width: 55px; justify-content: flex-end; }
.c-f { width: 58px; height: 22px; }
.r3 .combo { margin-right: -3px; }
.r3 .c-d { margin-right: 0; }
.btn { border: 1px solid #5a7bb0; background: #e8eef4; height: 22px; }
.b-edit { padding-left: 2px; width: 74px; margin-left: -2px; margin-right: -2px; }
.r3 .wide { margin-left: 2px; }
.r3 .w3 { margin-left: 3px; }
.r3 .w1 { margin-left: 1px; }
.g-mid { margin-left: 3px; margin-right: 0; }
.r3 .it.b-edit { gap: 4px; }
.r3 .caret { margin-left: -1px; }

.r4 { padding-left: 12px; padding-right: 6px; }
.r4 .it { gap: 3px; }
.r4 .it.b-sel { width: 50px; padding-left: 2px; gap: 1px; }
.r4 .it.g1 { gap: 1px; margin-right: 2px; }
.r4 .caret { margin-left: -4px; }
.r4 .it.n4 { gap: 4px; }
.r4 .combo .caret { margin-left: 0; }

.viewport { height: 434px; background: #f3f1e4; padding: 0 1px 0 3px; }
.scene { display: block; width: 830px; height: 434px; }
.gl path { stroke: #1d7d1d; stroke-width: 1.1; fill: none; }
.rl path { stroke: #e81c28; stroke-width: 1.2; fill: none; }
.rl .bold { stroke-width: 1.8; }
.dk { stroke: #7a1414; stroke-width: 1; fill: none; }
.gc circle { fill: none; stroke: #1a7a1a; stroke-width: 1; }
.lb text { font: 16px "DejaVu Sans", sans-serif; fill: #dcdcdc; }
.mid text { text-anchor: middle; }
.ov-r path { stroke: #8a2a62; stroke-width: 1.2; fill: none; }
.ov-g path { stroke: #14704a; stroke-width: 1.2; fill: none; }
.ax { font: 14px "DejaVu Sans", sans-serif; }
.az { fill: #4a90f0; }
.ay { fill: #2ca02c; font-size: 10px; }
.ar { fill: #c01818; font-size: 10px; }

.r5 { padding-left: 6px; gap: 4px; }
.r5 .grip { margin-right: 1px; }
.bgroup { display: flex; flex: none; }
.b-wide { width: 75px; padding-left: 2px; }
.b-pt { width: 51px; padding-left: 2px; }
.r5 .g-a { margin-left: 3px; margin-right: -1px; }
.sp3 { margin-left: 3px; }
.s-a { margin-left: 2px; margin-right: -3px; }
.fld { display: flex; align-items: center; gap: 4px; flex: none; }
.fld .grey { width: 11px; }
.f-y { margin-left: 4px; gap: 3px; }
.grey { color: #9a9a90; }
.spin { width: 55px; height: 21px; border: 1px solid #c4c2b0; background: #f3f1e6; display: flex; align-items: center; justify-content: flex-end; padding-right: 2px; gap: 6px; }
.spin b { font-weight: 400; color: #888; font-size: 10px; }
.s-y { width: 57px; }
.updown { width: 8px; height: 15px; display: flex; flex-direction: column; align-items: center; justify-content: center; gap: 3px; background: #efeee4; }
.updown::before { content: ""; border-left: 3px solid transparent; border-right: 3px solid transparent; border-bottom: 3px solid #777; }
.updown::after { content: ""; border-left: 3px solid transparent; border-right: 3px solid transparent; border-top: 3px solid #777; }
.s-b { margin-right: -1px; }
.check { width: 11px; height: 11px; border: 1px solid #9a9a90; background: #f6f5ec; flex: none; }
.rot { margin-left: 4px; }

.panel { height: 209px; background: #ece9d8; }
.panel-body { height: 202px; display: flex; }
.panel-side { width: 16px; flex: none; display: flex; flex-direction: column; align-items: center; padding-top: 4px; }
.xclose { width: 9px; height: 9px; margin-right: 3px; background: #d84a3a; border-radius: 2px; color: #fff; font: 700 9px/9px "DejaVu Sans", sans-serif; text-align: center; }
.dots { width: 2px; flex: 1; margin: 4px 3px 0 0; background: repeating-linear-gradient(#aaa 0 1px, transparent 1px 3px); }
.panel-main { width: 818px; flex: none; }
.nav { height: 28px; padding-left: 3px; }
.navbtns { display: flex; gap: 8px; flex: none; margin-right: -2px; }
.s-n { margin-right: -1px; }
.s-m { margin-right: -3px; }
.s-6 { margin-left: -1px; }
.s-9 { margin-left: 1px; }
.s-c { margin-left: 1px; }
.c-n { margin-left: -4px; }

.gridwrap { display: flex; border-top: 1px solid #bdbbae; border-bottom: 1px solid #b8b6a8; margin-top: 2px; height: 172px; background: #fff; }
.gridleft { width: 799px; flex: none; }
.tableclip { height: 153px; overflow: hidden; }
.grid { table-layout: fixed; width: 799px; border-collapse: collapse; }
.w-h { width: 33px; } .w-a { width: 73px; } .w-b { width: 56px; } .w-c { width: 36px; } .w-d { width: 33px; }
.w-e { width: 201px; } .w-f { width: 167px; } .w-g { width: 156px; } .w-i { width: 44px; }
.grid thead th { height: 18px; padding: 0; font-weight: 400; background: linear-gradient(#fff, #f0eee2 70%, #dedccb); border-right: 1px solid #c2c0b0; border-bottom: 1px solid #b0b0a0; white-space: nowrap; overflow: hidden; text-align: center; line-height: 14px; }
.grid thead th.act { background: linear-gradient(#fbdc9e, #f8c878); color: #8a3a10; }
.grid .rowh { height: 29px; font-weight: 400; padding: 0; text-align: center; background: linear-gradient(#fff, #efede0 70%, #dcdac8); border-bottom: 1px solid #c0beae; border-right: 1px solid #c0beae; }
.grid .rowh.act { background: #fbcf88; }
.grid td { height: 29px; padding: 0 0 0 2px; background: #c8fcd6; border-right: 1px solid #a3bdad; border-bottom: 1px solid #a3bdad; white-space: nowrap; overflow: hidden; }
.grid .nm { font: 11px/14px "Liberation Sans", sans-serif; }
.grid .ctr { text-align: center; padding: 0; }
.grid .dia { border-left: 2px solid #000; }
.grid .cur { background: #b6e6d2; border: 1px dotted #111; border-left: 2px solid #000; font: 11px/14px "Liberation Sans", sans-serif; }
.shape { width: 150px; margin: -1px 0 1px 22px; padding-left: 12px; height: 14px; border-bottom: 2px solid #000; text-align: center; color: #c40e0e; font: 11px/11px "Liberation Sans", sans-serif; }
.grid thead th.clip { text-align: left; padding-left: 5px; }

.hscroll { height: 16px; display: flex; align-items: stretch; background: #fdfdf6; padding-left: 4px; }
.sbtn { width: 14px; flex: none; background: linear-gradient(#e0eafc, #bcd0f4); border: 1px solid #fff; border-radius: 2px; color: #1a3a7a; font: 700 16px/12px "DejaVu Sans", sans-serif; text-align: center; }
.thumb { width: 248px; flex: none; margin-left: 1px; background: linear-gradient(#d4e0f8, #bccef4); border: 1px solid #fff; border-radius: 3px; display: flex; align-items: center; justify-content: center; }
.thumb i, .b-scroll i { font: 8px/8px "Liberation Mono", monospace; color: #8ea8d8; letter-spacing: -2px; }
.sbtn.r { margin-left: auto; }
.vscroll { width: 19px; flex: none; background: #fdfdf6; display: flex; flex-direction: column; padding-top: 3px; }
.vbtn { height: 14px; flex: none; margin: 0 2px; background: linear-gradient(#e0eafc, #bcd0f4); border: 1px solid #fff; border-radius: 2px; position: relative; }
.vbtn::after { content: ""; position: absolute; left: 3px; top: 3px; width: 6px; height: 6px; border-left: 2px solid #1a3a7a; border-top: 2px solid #1a3a7a; transform: rotate(45deg); }
.vbtn.dn::after { transform: rotate(225deg); top: 0; }
.vthumb { height: 10px; flex: none; margin: 0 2px; background: linear-gradient(#d4e0f8, #bccef4); border: 1px solid #fff; }
.vtrack { flex: 1; }
.corner { height: 19px; flex: none; background: #ece9d8; }
.status { height: 7px; display: flex; gap: 3px; padding-top: 2px; }
.status i { height: 5px; background: #f4f2e6; border: 1px solid #c4c2b2; border-bottom: 0; }
.st1 { width: 60px; } .st2 { width: 97px; } .st3 { width: 47px; } .st4 { width: 550px; } .st5 { width: 70px; }

/* browser window */
.browser { position: absolute; left: 838px; top: 0; width: 187px; height: 827px; overflow: hidden; background: #fff; white-space: nowrap; }
.wall { display: block; width: 187px; height: 22px; }
.b-top { height: 30px; background: #f4f4f4; }
.addr { height: 26px; background: #fff; border-top: 1px solid #d8d8d8; border-bottom: 1px solid #d8d8d8; color: #a8a8a8; font: 14.500px/24px "Liberation Sans", sans-serif; }
.host { color: #2a2a2a; }
.bm { height: 37px; background: #f6f6f6; display: flex; align-items: center; }
.mail { margin-left: 13px; display: flex; gap: 2px; align-items: center; }
.m139 { font: 700 9px/11px "Liberation Sans", sans-serif; color: #1a5ab0; border-bottom: 2px solid #1a5ab0; width: 17px; }
.m-t { color: #333; font-size: 12px; }
.more { color: #9a9a9a; font: 16px/16px "DejaVu Sans", sans-serif; margin-left: 8px; }
.vdots { width: 2px; height: 12px; margin-left: 39px; background: repeating-linear-gradient(#bbb 0 2px, transparent 2px 5px); }
.ext { width: 15px; height: 15px; margin-left: 15px; flex: none; }
.ext-t { margin-left: 2px; color: #333; }
.tabs { height: 28px; background: #f0f0f0; display: flex; align-items: flex-end; border-bottom: 1px solid #d8d8d8; }
.tab-x { width: 28px; height: 24px; background: #f7f7f7; border: 1px solid #cfcfcf; border-left: 0; border-bottom: 0; color: #999; font: 14px/22px "DejaVu Sans", sans-serif; text-align: center; flex: none; }
.tab-on { margin-left: 2px; height: 27px; flex: 1; background: #fff; border: 1px solid #cfcfcf; border-right: 0; border-bottom: 0; border-radius: 3px 0 0 0; margin-bottom: -1px; display: flex; align-items: center; gap: 5px; padding-left: 11px; font-size: 12px; }
.fav { width: 15px; height: 15px; flex: none; }
.content { height: 670px; overflow: hidden; padding-top: 2px; }
.q { height: 34px; border-top: 1px dotted #bbb; display: flex; align-items: center; padding-left: 7px; }
.q.last { height: 48px; display: block; border-bottom: 1px solid #ccc; padding: 0; }
.q1 { height: 30px; display: flex; align-items: center; padding-left: 7px; }
.qm { width: 20px; flex: none; font: 700 17px/18px "DejaVu Sans", sans-serif; color: #e8c22a; text-shadow: 0 1px 0 #b08a10; }
.qt { color: #1c1c9e; font-size: 14px; }
.lat { font: 14px/16px "Liberation Mono", monospace; letter-spacing: -.8px; }
.qt .lat { font-size: 13px; letter-spacing: -1.050px; }
.coin { width: 10px; height: 10px; margin: 0 5px 0 9px; border-radius: 2px; background: repeating-linear-gradient(#e8b83a 0 2px, #b8861a 2px 3px); flex: none; }
.zero { color: #b86a6a; font-size: 12px; margin-right: 8px; }
.tag { font-size: 12px; color: #222; }
.tagline { padding-left: 4px; margin-top: -3px; color: #222; font-size: 12px; line-height: 14px; }
.asker { margin-top: 9px; height: 16px; padding-left: 20px; color: #8a8a8a; font-size: 12px; line-height: 16px; }
.who { color: #4a5a7a; }
.pipe { margin: 0 13px; }
.qtext { margin: 12px 0 0; padding-left: 20px; font-size: 14.500px; line-height: 18px; color: #222; height: 18px; }
.editor { margin: 42px 0 0 20px; width: 320px; height: 287px; background: #e3effb; border: 1px solid #bccbdb; padding-left: 8px; }
.ed-head { height: 27px; padding-top: 6px; display: flex; align-items: center; gap: 7px; color: #555; font-size: 12px; }
.pic { width: 13px; height: 13px; flex: none; }
.ed-area { height: 244px; background: #fff; border: 1px solid #bccbdb; border-right: 0; padding: 6px 5px; color: #c8c8c8; font-size: 13px; line-height: 14px; }
.ans { margin: 16px 0 0 20px; font-size: 14.500px; line-height: 18px; font-weight: 700; color: #111; height: 18px; }
.author { margin-top: 19px; padding-left: 20px; line-height: 18px; height: 18px; font-size: 12px; }
.au { color: #3a5a9a; }
.bar { color: #bbb; margin: 0 7px; }
.lv { color: #aaa; }
.answer { margin-top: 18px; padding: 0 0 2px 24px; height: 55px; font-size: 15px; line-height: 26px; color: #222; border-bottom: 1px dashed #bbb; }
.am { font: 13px/26px "Liberation Mono", monospace; }
.a2 { margin-top: 13px; }
.b-scroll { height: 14px; background: linear-gradient(#cfdcf6, #bccef2); display: flex; align-items: center; justify-content: center; }

/* hand-drawn annotation over both windows */
.marks { position: absolute; left: 0; top: 0; width: 1025px; height: 827px; pointer-events: none; }
```
